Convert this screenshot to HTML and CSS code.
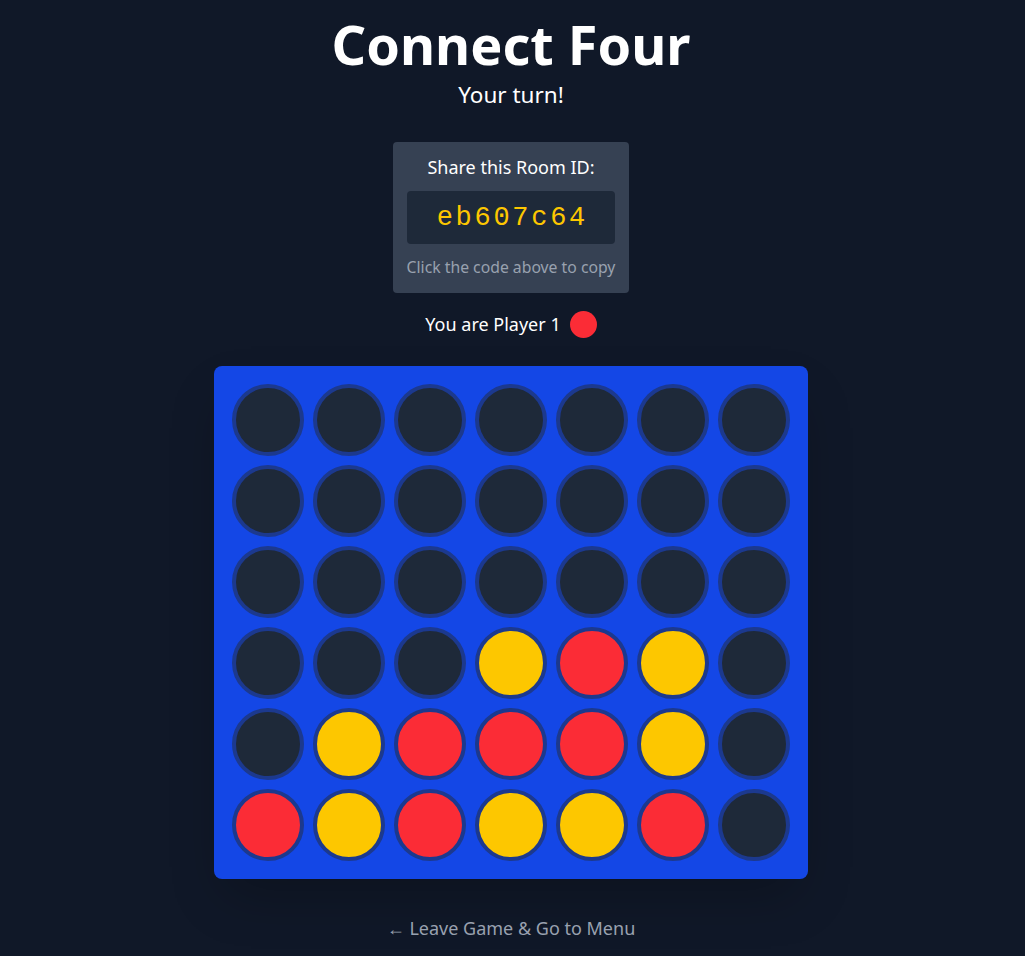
FILE: index.html
```html
<!DOCTYPE html>
<html lang="en">
<head>
<meta charset="utf-8">
<title>Connect Four</title>
<link rel="stylesheet" href="styles.css">
</head>
<body>
<main class="page">
  <h1 class="title">Connect Four</h1>
  <p class="status">Your turn!</p>

  <section class="room-card">
    <p class="room-label">Share this Room ID:</p>
    <div class="room-code">eb607c64</div>
    <p class="room-hint">Click the code above to copy</p>
  </section>

  <div class="player-info">
    <span>You are Player 1</span>
    <span class="player-disc"></span>
  </div>

  <div class="board">
    <div class="cell"></div><div class="cell"></div><div class="cell"></div><div class="cell"></div><div class="cell"></div><div class="cell"></div><div class="cell"></div>
    <div class="cell"></div><div class="cell"></div><div class="cell"></div><div class="cell"></div><div class="cell"></div><div class="cell"></div><div class="cell"></div>
    <div class="cell"></div><div class="cell"></div><div class="cell"></div><div class="cell"></div><div class="cell"></div><div class="cell"></div><div class="cell"></div>
    <div class="cell"></div><div class="cell"></div><div class="cell"></div><div class="cell yellow"></div><div class="cell red"></div><div class="cell yellow"></div><div class="cell"></div>
    <div class="cell"></div><div class="cell yellow"></div><div class="cell red"></div><div class="cell red"></div><div class="cell red"></div><div class="cell yellow"></div><div class="cell"></div>
    <div class="cell red"></div><div class="cell yellow"></div><div class="cell red"></div><div class="cell yellow"></div><div class="cell yellow"></div><div class="cell red"></div><div class="cell"></div>
  </div>

  <a class="leave-link" href="#">&larr; Leave Game &amp; Go to Menu</a>
</main>
</body>
</html>
```

FILE: styles.css
```css
* {
  box-sizing: border-box;
}

html, body {
  margin: 0;
  padding: 0;
  background: #101828;
}

body {
  font-family: "Noto Sans", "Open Sans", sans-serif;
  color: #ffffff;
  min-height: 956px;
}

.page {
  display: flex;
  flex-direction: column;
  align-items: center;
  padding-top: 17px;
  padding-right: 3px;
}

.title {
  margin: 0;
  font-size: 54px;
  font-weight: 700;
  line-height: 54px;
}

.status {
  margin: 7.5px 0 0;
  font-size: 22.5px;
  line-height: 31.5px;
}

.room-card {
  margin-top: 32px;
  background: #364153;
  border-radius: 4px;
  padding: 12.5px 13.5px 14px;
  display: flex;
  flex-direction: column;
  align-items: center;
}

.room-label {
  margin: 0;
  font-size: 18px;
  line-height: 24px;
}

.room-code {
  margin-top: 12.5px;
  align-self: stretch;
  background: #1e2939;
  border-radius: 4px;
  height: 53px;
  display: flex;
  align-items: center;
  justify-content: center;
  font-family: "Liberation Mono", "Courier New", monospace;
  font-size: 27px;
  letter-spacing: 0.1em;
  padding-left: 0.1em;
  color: #fdc700;
}

.room-hint {
  margin: 12.3px 0 0;
  font-size: 15.75px;
  line-height: 22.5px;
  color: #99a1af;
}

.player-info {
  margin-top: 18px;
  display: flex;
  align-items: center;
  gap: 9px;
  font-size: 18px;
  line-height: 27px;
}

.player-disc {
  width: 27px;
  height: 27px;
  border-radius: 50%;
  background: #fb2c36;
}

.board {
  margin-top: 28px;
  background: #1447e6;
  border-radius: 8px;
  padding: 18px;
  display: grid;
  grid-template-columns: repeat(7, 72px);
  grid-auto-rows: 72px;
  gap: 9px;
  box-shadow: 0 25px 50px -12px rgba(0, 0, 0, 0.25);
}

.cell {
  border-radius: 50%;
  background: #1e2939;
  border: 4px solid #1c398e;
}

.cell.red {
  background: #fb2c36;
}

.cell.yellow {
  background: #fdc700;
}

.leave-link {
  margin-top: 36px;
  font-size: 18px;
  line-height: 27px;
  color: #99a1af;
  text-decoration: none;
}
```
